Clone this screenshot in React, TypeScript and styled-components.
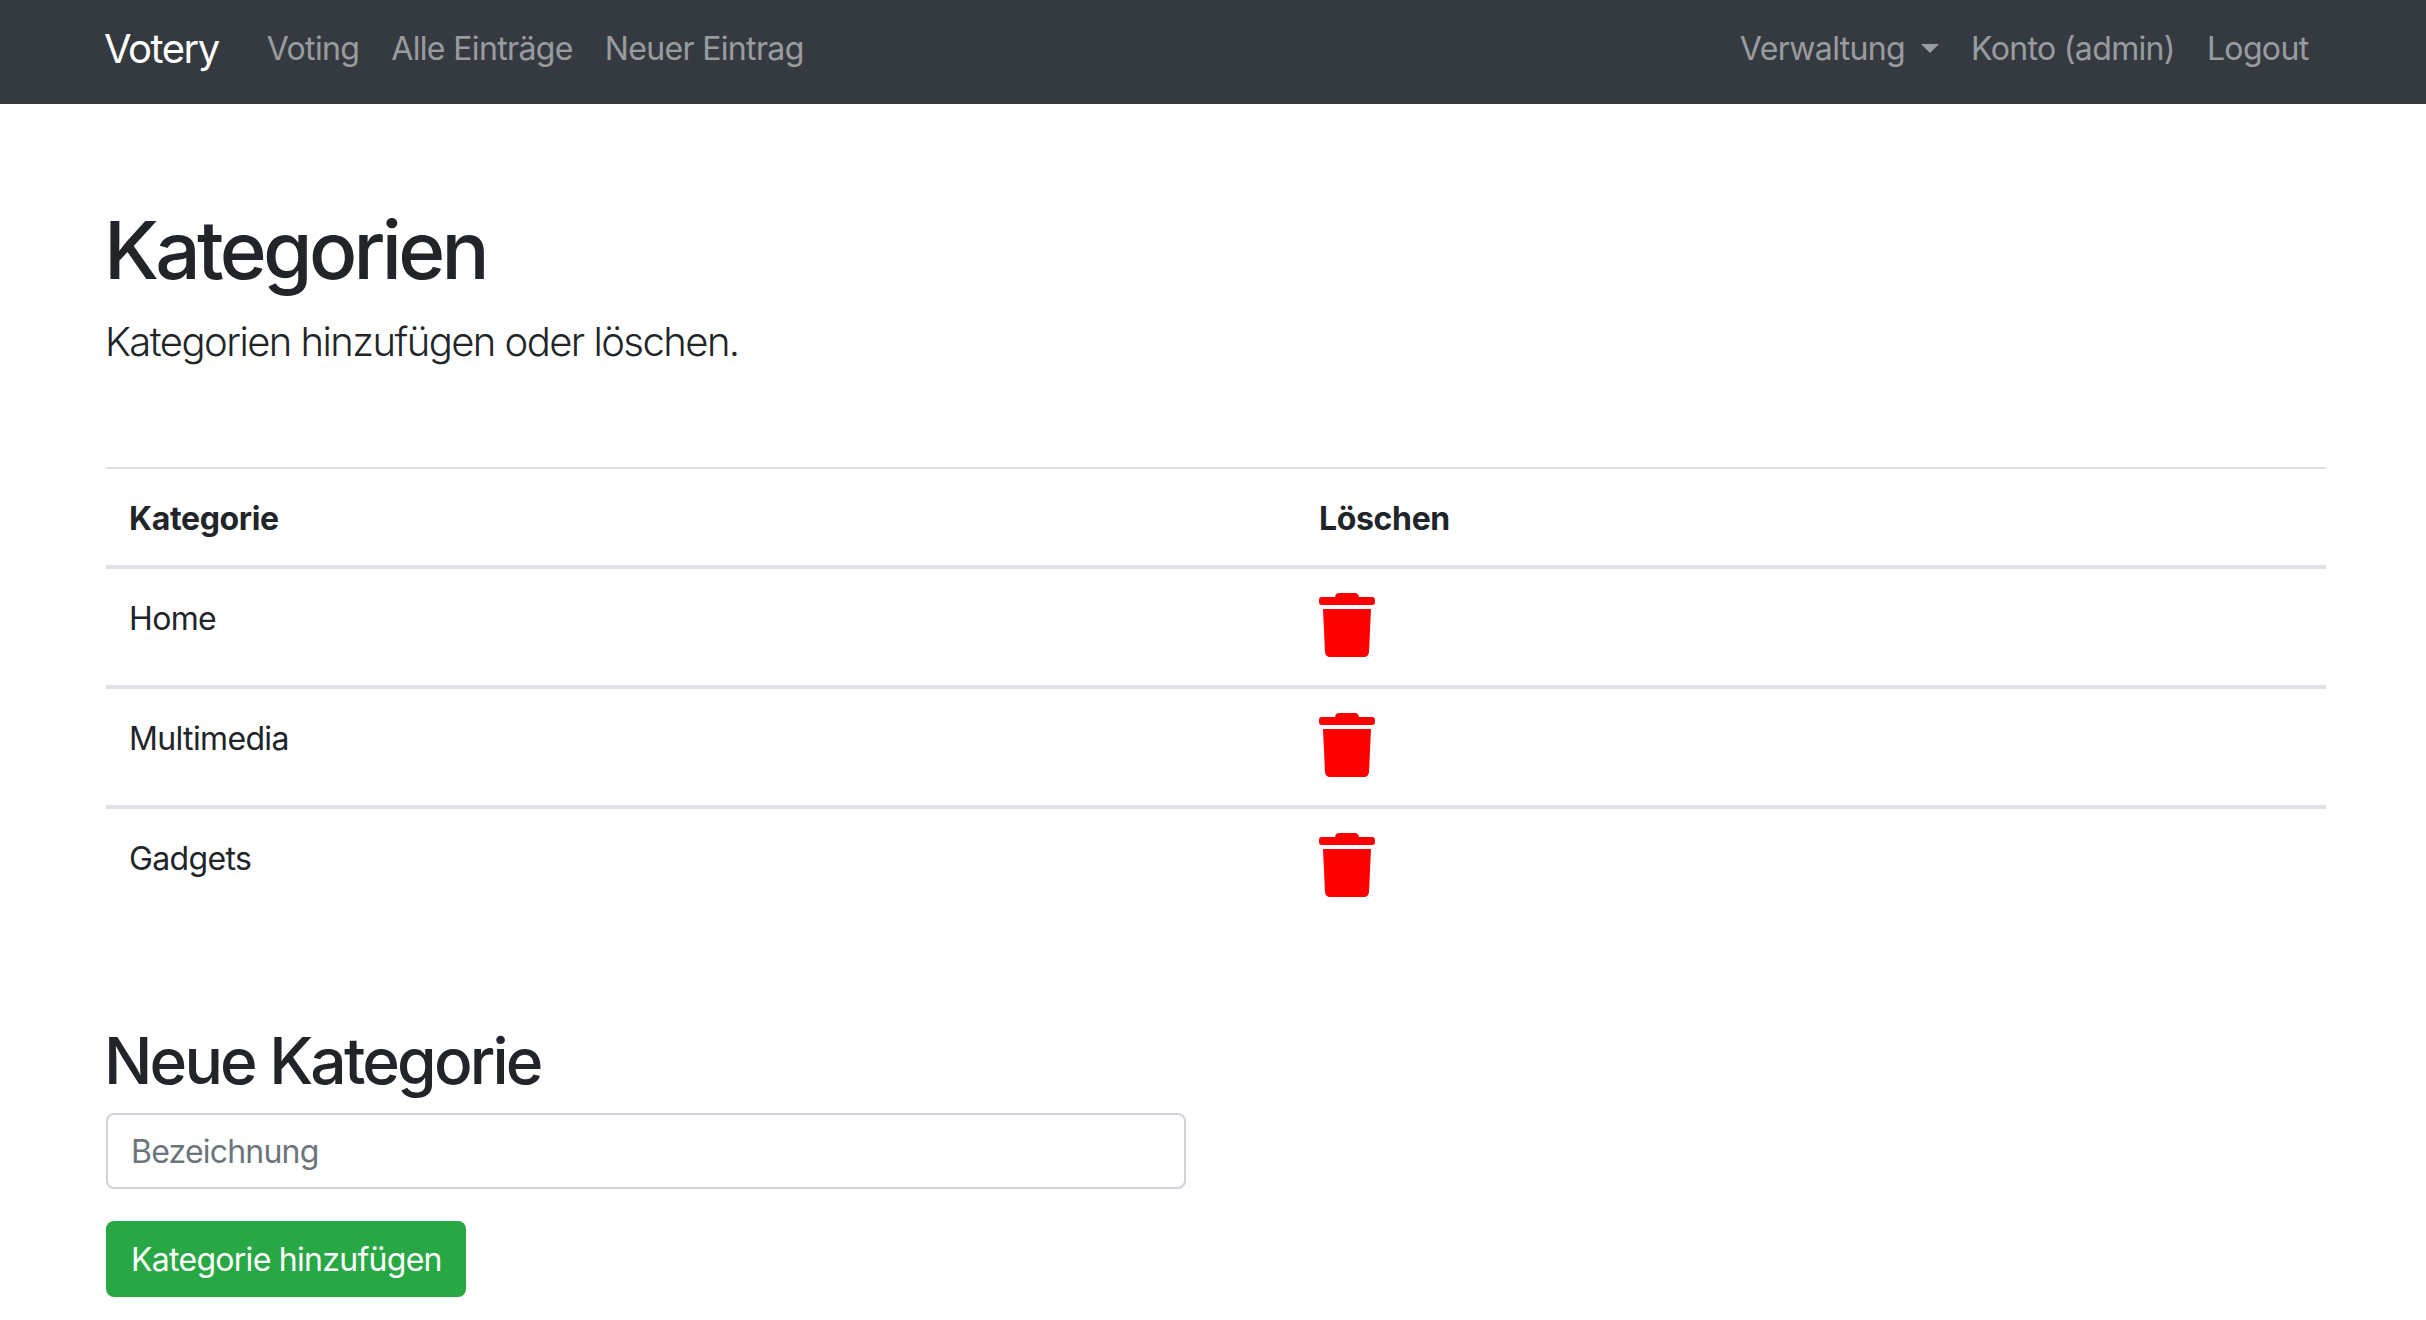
import styled, { createGlobalStyle } from "styled-components";

const GlobalStyle = createGlobalStyle`
  html, body {
    margin: 0;
    background: #fff;
    color: #212529;
    font-family: Inter, "Noto Sans", sans-serif;
    font-size: 32px;
    line-height: 1.5;
    letter-spacing: -0.65px;
  }
  * { box-sizing: border-box; }
`;

const Navbar = styled.nav`
  height: 104px;
  padding: 0 101.5px 6px 104px;
  background: #343a40;
  display: flex;
  align-items: center;
`;

const Brand = styled.a`
  font-size: 40px;
  letter-spacing: -1.5px;
  color: #fff;
  margin-right: 32px;
`;

const NavList = styled.div<{ $right?: boolean }>`
  display: flex;
  align-items: center;
  margin-left: ${(p) => (p.$right ? "auto" : "0")};
`;

const NavLink = styled.a`
  padding: 0 16px;
  font-size: 32px;
  color: rgba(255, 255, 255, 0.5);
  display: flex;
  align-items: center;
`;

const Caret = styled.span`
  margin-left: 16px;
  margin-top: -2px;
  border-top: 9px solid rgba(255, 255, 255, 0.5);
  border-left: 9px solid transparent;
  border-right: 9px solid transparent;
`;

const Main = styled.main`
  padding: 98px 100px 0 106px;
`;

const Title = styled.h1`
  margin: 0 0 14px -2px;
  font-size: 80px;
  font-weight: 500;
  line-height: 1.2;
  letter-spacing: -3.7px;
`;

const Lead = styled.p`
  margin: 0 0 95px -1px;
  font-size: 40px;
  font-weight: 300;
  letter-spacing: -1.55px;
`;

const Table = styled.table`
  width: 100%;
  border-collapse: collapse;
  margin-bottom: 96px;
`;

const HeadCell = styled.th<{ $width?: number }>`
  width: ${(p) => (p.$width ? `${p.$width}px` : "auto")};
  padding: 26px 24px 22px;
  text-align: left;
  font-size: 32px;
  font-weight: 700;
  letter-spacing: -0.35px;
  border-top: 2px solid #dee2e6;
  border-bottom: 4px solid #dee2e6;
  &:first-child { padding-left: 23px; }
`;

const Cell = styled.td`
  padding: 24px;
  height: 120px;
  vertical-align: top;
  border-top: 4px solid #dee2e6;
  &:first-child { padding-left: 23px; }
`;

const CellText = styled.span`
  display: block;
  padding-top: 2px;
`;

const FirstRow = styled.tr`
  & > td { border-top: 0; }
`;

const Trash = styled.svg`
  display: block;
  width: 56px;
  height: 64px;
  fill: #ff0000;
`;

const SubTitle = styled.h2`
  margin: 0 0 13px -2px;
  font-size: 64px;
  font-weight: 500;
  line-height: 1.2;
  letter-spacing: -2.8px;
`;

const Input = styled.input`
  display: block;
  width: 1080px;
  height: 76px;
  padding: 2px 24px 0 23px;
  margin-bottom: 32px;
  border: 2px solid #ced4da;
  border-radius: 8px;
  font: inherit;
  letter-spacing: -0.8px;
  &::placeholder { color: #6c757d; opacity: 1; }
`;

const Button = styled.button`
  display: block;
  width: 360px;
  height: 76px;
  padding: 2px 0 0 25px;
  border: 0;
  border-radius: 8px;
  background: #28a745;
  color: #fff;
  font: inherit;
  letter-spacing: -0.72px;
  text-align: left;
`;

const TrashIcon = () => (
  <Trash viewBox="0 0 56 64">
    <path d="M20 0h16c2 0 3.500 1.500 4 4h13a3 3 0 0 1 3 3v2a3 3 0 0 1-3 3H3a3 3 0 0 1-3-3V7a3 3 0 0 1 3-3h13c.5-2.500 2-4 4-4z" />
    <path d="M4 16h48l-2 43c-.2 3-2.500 5-5 5H11c-2.500 0-4.800-2-5-5z" />
  </Trash>
);

const categories = ["Home", "Multimedia", "Gadgets"];

export default function App() {
  return (
    <>
      <GlobalStyle />
      <Navbar>
        <Brand>Votery</Brand>
        <NavList>
          <NavLink>Voting</NavLink>
          <NavLink>Alle Einträge</NavLink>
          <NavLink>Neuer Eintrag</NavLink>
        </NavList>
        <NavList $right>
          <NavLink>
            Verwaltung
            <Caret />
          </NavLink>
          <NavLink>Konto (admin)</NavLink>
          <NavLink>Logout</NavLink>
        </NavList>
      </Navbar>
      <Main>
        <Title>Kategorien</Title>
        <Lead>Kategorien hinzufügen oder löschen.</Lead>
        <Table>
          <thead>
            <tr>
              <HeadCell $width={1189}>Kategorie</HeadCell>
              <HeadCell>Löschen</HeadCell>
            </tr>
          </thead>
          <tbody>
            {categories.map((name, i) => {
              const Row = i === 0 ? FirstRow : "tr";
              return (
                <Row key={name}>
                  <Cell>
                    <CellText>{name}</CellText>
                  </Cell>
                  <Cell>
                    <TrashIcon />
                  </Cell>
                </Row>
              );
            })}
          </tbody>
        </Table>
        <SubTitle>Neue Kategorie</SubTitle>
        <Input placeholder="Bezeichnung" />
        <Button>Kategorie hinzufügen</Button>
      </Main>
    </>
  );
}
